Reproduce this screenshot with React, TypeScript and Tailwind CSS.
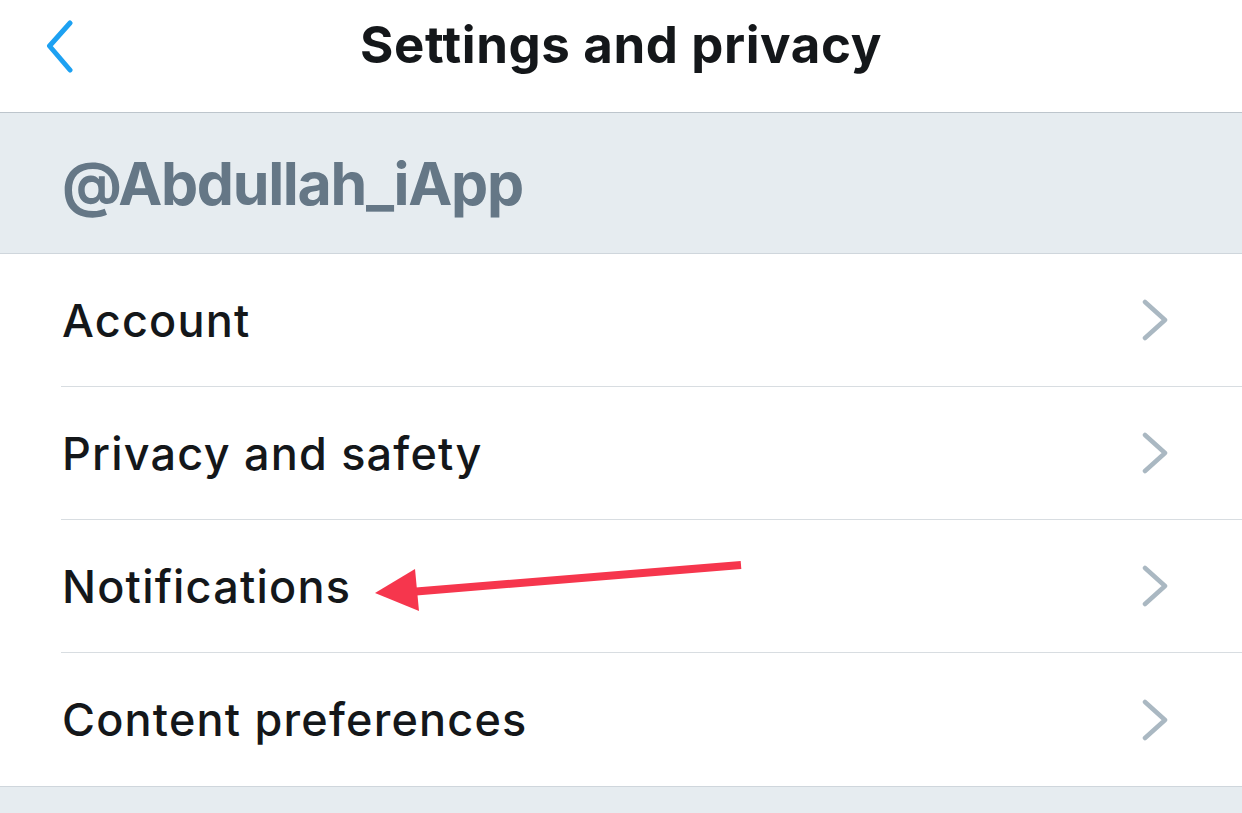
import React from "react";

const rows = ["Account", "Privacy and safety", "Notifications", "Content preferences"];

function Chevron() {
  return (
    <svg width="30" height="42" viewBox="0 0 30 42" fill="none" className="shrink-0">
      <path d="M5 3 L25 21 L5 39" stroke="#aab8c2" strokeWidth="4.5" strokeLinecap="round" strokeLinejoin="round" />
    </svg>
  );
}

export default function App() {
  return (
    <div className="relative w-[1242px] h-[813px] overflow-hidden bg-[#e6ecf0]" style={{ fontFamily: "Inter, 'Noto Sans', sans-serif" }}>
      {/* Nav bar */}
      <div className="relative h-[113px] bg-white border-b border-[#bdc5cc] flex items-start justify-center">
        <div className="absolute left-[45px] top-[20px]">
          <svg width="32" height="54" viewBox="0 0 32 54" fill="none">
            <path d="M25 3 L4.5 26 L25 50" stroke="#1da1f2" strokeWidth="5" strokeLinecap="round" strokeLinejoin="round" />
          </svg>
        </div>
        <div className="mt-[14px] text-[51px] leading-[62px] font-bold text-[#14171a] tracking-[0.6px]">Settings and privacy</div>
      </div>
      {/* Handle header */}
      <div className="h-[141px] bg-[#e6ecf0] border-b border-[#cfd6dc] flex items-center pl-[62px]">
        <div className="text-[59px] font-bold text-[#657786] tracking-[-1.3px] leading-none">@Abdullah_iApp</div>
      </div>
      {/* Rows */}
      <div className="bg-white border-b border-[#cfd6dc]">
        {rows.map((r, i) => (
          <div key={r} className="pl-[61px]">
            <div className={`h-[133px] flex items-center justify-between pr-[72px] ${i < rows.length - 1 ? "border-b border-[#d8dde1]" : ""}`}>
              <span className="pl-[1px] text-[45px] font-medium text-[#14171a] tracking-[1.2px] leading-none">{r}</span>
              <Chevron />
            </div>
          </div>
        ))}
      </div>
      {/* Annotation arrow */}
      <svg className="absolute left-0 top-0 pointer-events-none" width="1242" height="813" viewBox="0 0 1242 813">
        <line x1="741" y1="565" x2="410" y2="592" stroke="#f6364d" strokeWidth="8" strokeLinecap="butt" />
        <polygon points="375,593 415,569 419,611" fill="#f6364d" />
      </svg>
    </div>
  );
}
